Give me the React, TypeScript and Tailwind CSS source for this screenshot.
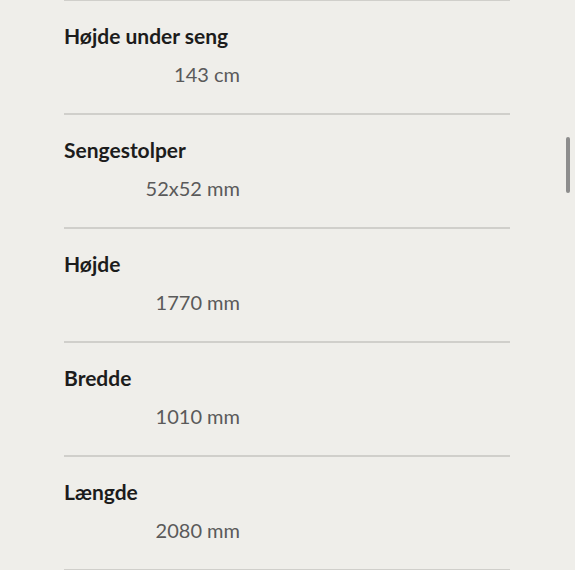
import React from "react";

const rows = [
  { label: "Højde under seng", value: "143 cm" },
  { label: "Sengestolper", value: "52x52 mm" },
  { label: "Højde", value: "1770 mm" },
  { label: "Bredde", value: "1010 mm" },
  { label: "Længde", value: "2080 mm" },
];

export default function App() {
  return (
    <div className="relative w-[575px] h-[570px] overflow-hidden bg-[#efeeea]" style={{ fontFamily: "Lato, 'Noto Sans', sans-serif" }}>
      <div className="ml-[64px] w-[446px] -mt-[1px]">
        {rows.map((r) => (
          <div key={r.label} className="h-[114px] border-t-2 border-[#d0cfcb] pt-[21px]">
            <div className="text-[21px] leading-[28px] font-bold text-[#1c1c1c]">{r.label}</div>
            <div className="w-[176px] text-right text-[20px] leading-[28px] mt-[10px] text-[#5a5a5a]">{r.value}</div>
          </div>
        ))}
        <div className="border-t-2 border-[#d0cfcb]" />
      </div>
      <div className="absolute left-[566px] top-[137px] w-[4px] h-[56px] rounded-full bg-[#8d8d8d]" />
    </div>
  );
}
